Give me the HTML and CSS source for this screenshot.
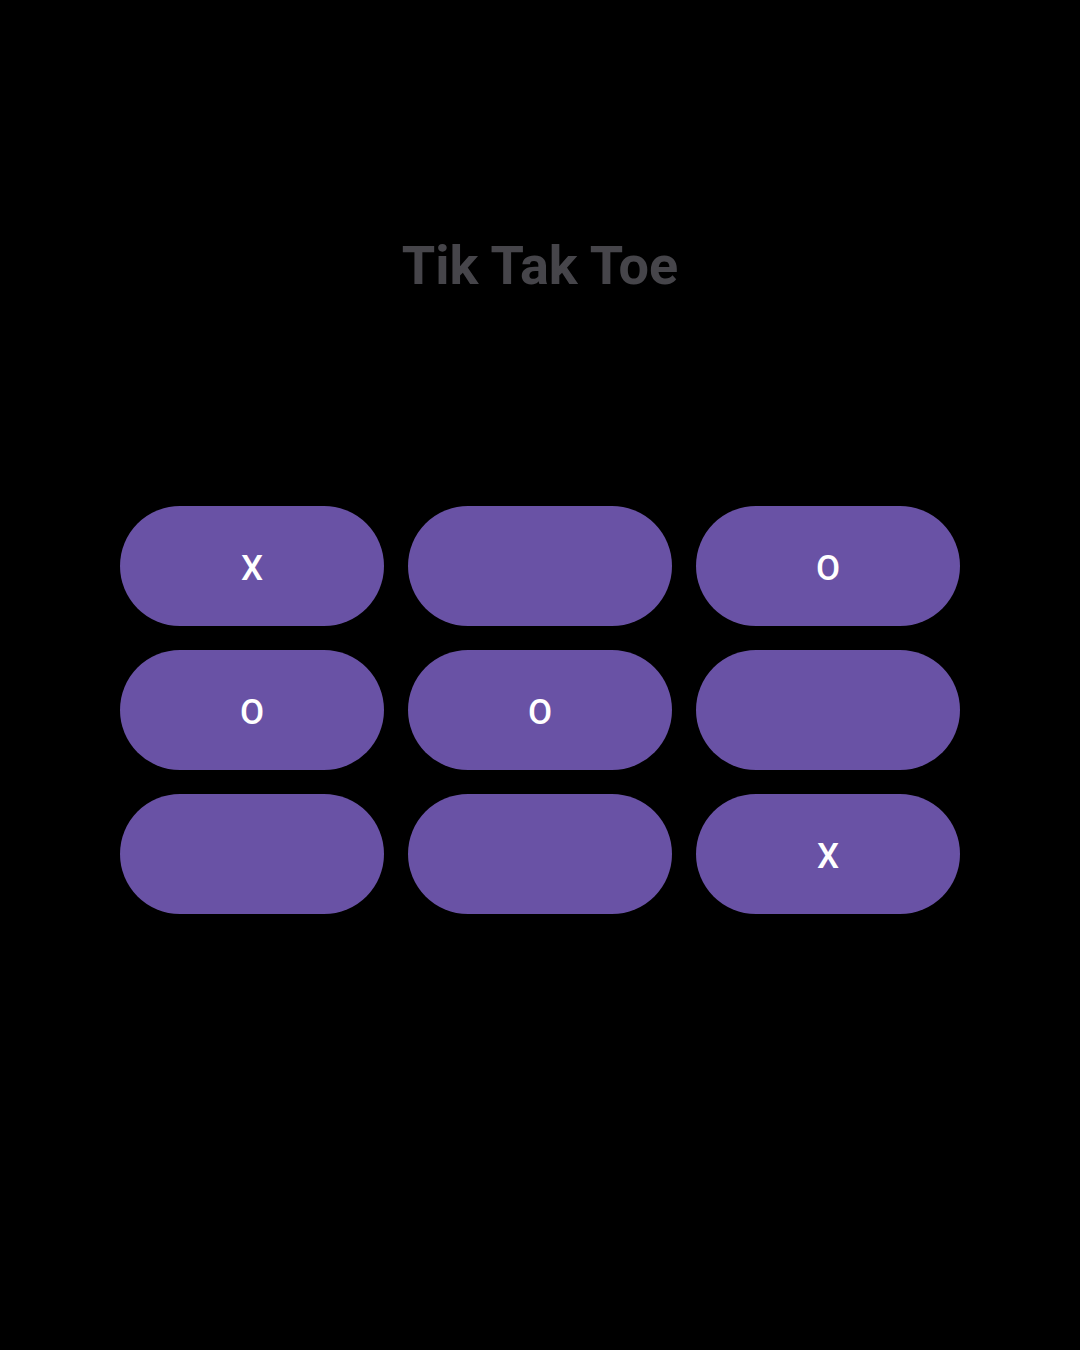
FILE: index.html
```html
<!DOCTYPE html>
<html>
<head>
<meta charset="utf-8">
<link rel="stylesheet" href="styles.css">
</head>
<body>
<div class="app">
  <h1 class="title">Tik Tak Toe</h1>
  <div class="board">
    <button class="cell">X</button>
    <button class="cell"></button>
    <button class="cell">O</button>
    <button class="cell">O</button>
    <button class="cell">O</button>
    <button class="cell"></button>
    <button class="cell"></button>
    <button class="cell"></button>
    <button class="cell">X</button>
  </div>
</div>
</body>
</html>
```
FILE: styles.css
```css
html, body {
  margin: 0;
  padding: 0;
  background: #000;
}
.app {
  width: 1080px;
  height: 1350px;
  display: flex;
  flex-direction: column;
  align-items: center;
  font-family: Roboto, "Liberation Sans", sans-serif;
}
.title {
  margin: 234px 0 0 0;
  font-size: 54px;
  line-height: 64px;
  font-weight: 700;
  color: #46454a;
}
.board {
  margin-top: 208px;
  display: grid;
  grid-template-columns: repeat(3, 264px);
  grid-auto-rows: 120px;
  gap: 24px;
}
.cell {
  border: none;
  border-radius: 60px;
  background: #6952a5;
  color: #ffffff;
  font-family: Roboto, "Liberation Sans", sans-serif;
  font-size: 35px;
  font-weight: 500;
  padding: 5px 0 0 0;
  display: flex;
  align-items: center;
  justify-content: center;
}
```
